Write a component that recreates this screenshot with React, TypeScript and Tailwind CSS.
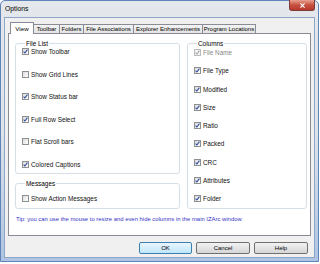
import React from 'react';

const font = { fontFamily: '"Liberation Sans", Arial, sans-serif' };

function Check({ on, dim }: { on: boolean; dim?: boolean }) {
  return (
    <span
      className={`flex h-[7px] w-[7px] shrink-0 items-center justify-center border ${
        dim ? 'border-[#bcbcbc] bg-[#f4f4f4]' : 'border-[#8e8f8f] bg-gradient-to-br from-[#dcdcdc] to-white'
      }`}
    >
      {on && (
        <svg viewBox="0 0 5 5" className="h-[5px] w-[5px]">
          <path d="M0.6 2.6 L1.9 4 L4.4 0.7" fill="none" stroke={dim ? '#a8a8a8' : '#2c4a9a'} strokeWidth="1.1" />
        </svg>
      )}
    </span>
  );
}

function Row({ label, on, dim }: { label: string; on: boolean; dim?: boolean }) {
  return (
    <div className="flex h-[7px] items-center gap-[2px]">
      <Check on={on} dim={dim} />
      <span className={`text-[6.4px] leading-[7px] ${dim ? 'text-[#8a8a8a]' : 'text-[#111]'}`}>{label}</span>
    </div>
  );
}

const tabs = [
  { name: 'Toolbar', w: 'w-[27px]' },
  { name: 'Folders', w: 'w-[25px]' },
  { name: 'File Associations', w: 'w-[51px]' },
  { name: 'Explorer Enhancements', w: 'w-[70px]' },
  { name: 'Program Locations', w: 'w-[54px]' },
];

const fileList: [string, boolean][] = [
  ['Show Toolbar', true],
  ['Show Grid Lines', false],
  ['Show Status bar', true],
  ['Full Row Select', true],
  ['Flat Scroll bars', false],
  ['Colored Captions', true],
];

const columns = ['File Type', 'Modified', 'Size', 'Ratio', 'Packed', 'CRC', 'Attributes', 'Folder'];

export default function App() {
  return (
    <div className="h-[264px] w-[320px] bg-white" style={font}>
      <div className="flex h-[262px] w-[319px] flex-col rounded-t-[5px] border border-[#5f84ba] bg-gradient-to-b from-[#e4e7eb] via-[#dfe4ea] to-[#aec4e2]">
        {/* title bar */}
        <div className="flex h-[16px] items-start justify-between">
          <span className="pl-[4px] pt-[4px] text-[6.8px] leading-[8px] text-black">Options</span>
          <div className="-mt-px mr-[3px] flex h-[11px] w-[26px] items-center justify-center rounded-b-[3px] border border-t-0 border-[#7a3b3b] bg-gradient-to-b from-[#e8a090] via-[#c75040] to-[#b83a2c]">
            <svg viewBox="0 0 8 6" className="h-[5px] w-[7px]">
              <path d="M1.5 0.5 L6.5 5.5 M6.5 0.5 L1.5 5.5" stroke="white" strokeWidth="1.4" />
            </svg>
          </div>
        </div>

        {/* client area */}
        <div className="mx-[3px] mb-[3px] flex flex-1 flex-col border border-[#8da5c6] bg-[#f0f0f0] pt-[4px]">
          {/* tabs */}
          <div className="flex h-[11px] items-end pl-[5px]">
            <div className="relative z-10 -mb-px flex h-[12px] w-[24px] items-center justify-center border border-b-0 border-[#898c95] bg-white text-[6.2px] text-black">
              View
            </div>
            {tabs.map((t) => (
              <div
                key={t.name}
                className={`-ml-px flex h-[9px] ${t.w} items-center justify-center border border-b-0 border-[#898c95] bg-gradient-to-b from-[#f3f3f3] to-[#e3e3e3] text-[6px] leading-[7px] text-black`}
              >
                {t.name}
              </div>
            ))}
          </div>

          {/* pane */}
          <div className="mx-[3px] flex h-[203px] flex-col border border-[#898c95] bg-white pl-[6px] pr-[3px] pt-[6px]">
            <div className="flex gap-[7px]">
              <div className="flex w-[165px] flex-col gap-[6px]">
                <fieldset className="flex h-[134px] flex-col gap-[15.6px] rounded-[3px] border border-[#d5dfe5] pl-[6px] pt-[1px]">
                  <legend className="ml-[3px] px-[1px] text-[6.4px] leading-[7px] text-black">File List</legend>
                  {fileList.map(([l, on]) => (
                    <Row key={l} label={l} on={on} />
                  ))}
                </fieldset>
                <fieldset className="flex h-[29px] flex-col rounded-[3px] border border-[#d5dfe5] pl-[6px] pt-[8px]">
                  <legend className="ml-[3px] px-[1px] text-[6.4px] leading-[7px] text-black">Messages</legend>
                  <Row label="Show Action Messages" on={false} />
                </fieldset>
              </div>
              <fieldset className="flex h-[169px] w-[120px] flex-col gap-[11.3px] rounded-[3px] border border-[#d5dfe5] pl-[6px] pt-[2px]">
                <legend className="ml-[3px] px-[1px] text-[6.4px] leading-[7px] text-black">Columns</legend>
                <Row label="File Name" on dim />
                {columns.map((c) => (
                  <Row key={c} label={c} on />
                ))}
              </fieldset>
            </div>
            <p className="mt-[7px] pl-[1px] text-[5.9px] leading-[7px] text-[#3434c4]">
              Tip: you can use the mouse to resize and even hide columns in the main IZArc window
            </p>
          </div>

          {/* buttons */}
          <div className="mt-[6px] flex justify-end gap-[4px] pr-[6px]">
            <button className="flex h-[12px] w-[53px] items-center justify-center rounded-[2px] border border-[#3c7fb1] bg-gradient-to-b from-[#eaf6fd] to-[#bee6fd] text-[6px] text-black">
              OK
            </button>
            <button className="flex h-[12px] w-[54px] items-center justify-center rounded-[2px] border border-[#707070] bg-gradient-to-b from-[#f2f2f2] to-[#d6d6d6] text-[6px] text-black">
              Cancel
            </button>
            <button className="flex h-[12px] w-[54px] items-center justify-center rounded-[2px] border border-[#707070] bg-gradient-to-b from-[#f2f2f2] to-[#d6d6d6] text-[6px] text-black">
              Help
            </button>
          </div>
        </div>
      </div>
    </div>
  );
}
